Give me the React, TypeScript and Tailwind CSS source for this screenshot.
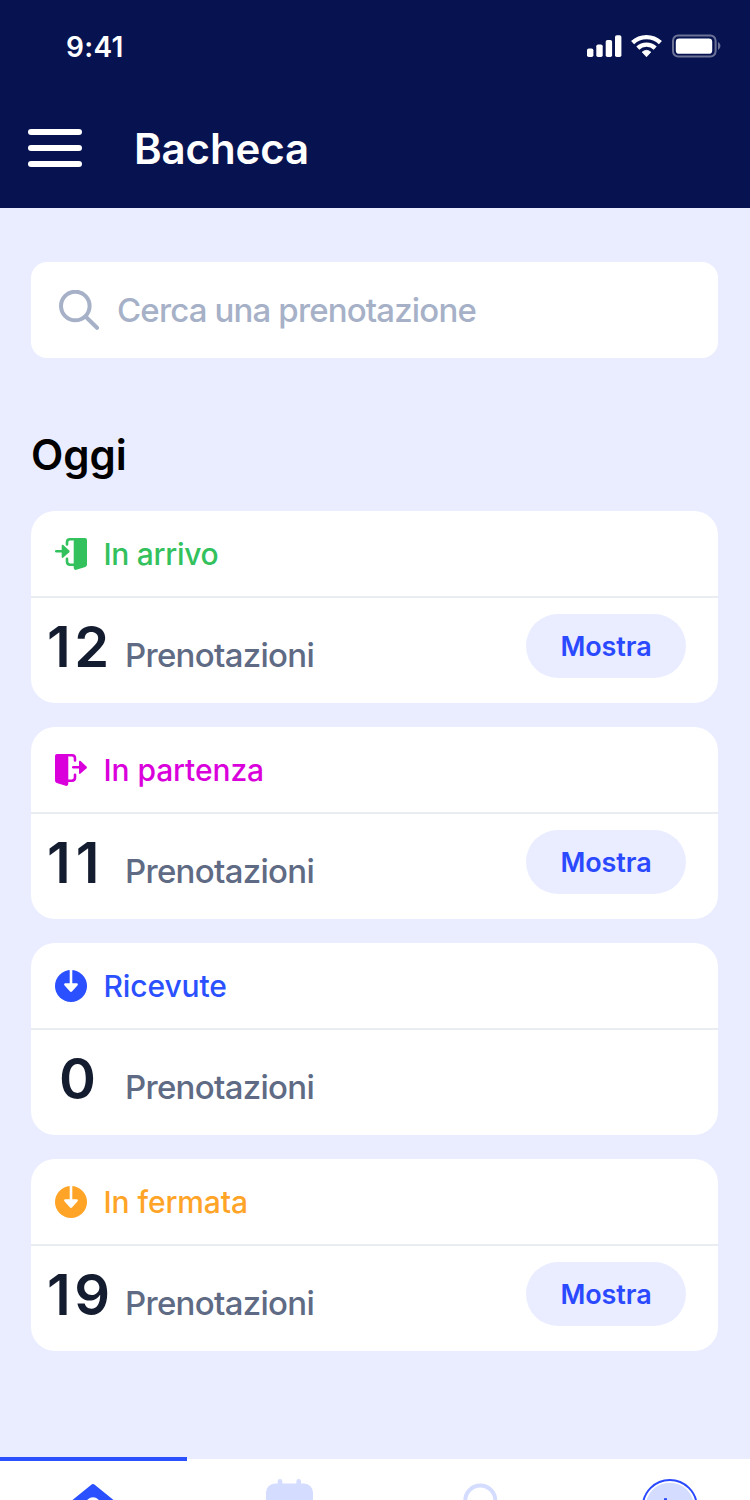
import React from "react";

type IconKind = "enter" | "exit" | "download";

interface Booking {
  label: string;
  count: number;
  icon: IconKind;
  color: string;
  labelSpacing: string;
  countClass: string;
  showButton: boolean;
}

const bookings: Booking[] = [
  {
    label: "In arrivo",
    count: 12,
    icon: "enter",
    color: "text-[#33c15d]",
    labelSpacing: "tracking-[-0.3px]",
    countClass: "tracking-[3.5px]",
    showButton: true,
  },
  {
    label: "In partenza",
    count: 11,
    icon: "exit",
    color: "text-[#da00dc]",
    labelSpacing: "tracking-[-0.1px]",
    countClass: "tracking-[5px]",
    showButton: true,
  },
  {
    label: "Ricevute",
    count: 0,
    icon: "download",
    color: "text-[#2a50ff]",
    labelSpacing: "tracking-[-0.1px]",
    countClass: "pl-3",
    showButton: false,
  },
  {
    label: "In fermata",
    count: 19,
    icon: "download",
    color: "text-[#ffa427]",
    labelSpacing: "tracking-[-0.1px]",
    countClass: "tracking-[3.5px]",
    showButton: true,
  },
];

const StatusIcons = () => (
  <svg width="136" height="28" viewBox="0 0 136 28" fill="white">
    <rect x="1" y="14.5" width="6.4" height="8.5" rx="1.8" />
    <rect x="10.3" y="10.5" width="6.4" height="12.5" rx="1.8" />
    <rect x="19.7" y="6" width="6.4" height="17" rx="1.8" />
    <rect x="29" y="1.2" width="6.4" height="21.8" rx="1.8" />
    <g fill="none" stroke="white" strokeWidth="4.4">
      <path d="M46.6 8.6A20.3 20.3 0 0 1 74.4 8.6" />
      <path d="M51.8 14.1A12.7 12.7 0 0 1 69.2 14.1" />
    </g>
    <path d="M56.2 18.1A6.7 6.7 0 0 1 64.8 18.1L60.5 22.8Z" strokeWidth="0.8" stroke="white" strokeLinejoin="round" />
    <rect x="87" y="1.5" width="42.6" height="21" rx="5.2" fill="none" stroke="#6b7296" strokeWidth="2" />
    <rect x="89.8" y="4.4" width="36.4" height="15.4" rx="3.4" />
    <path d="M132 8.1C135.2 9.6 135.2 14.3 132 15.9Z" fill="#6b7296" />
  </svg>
);

const DoorIcon = ({ kind }: { kind: IconKind }) => {
  if (kind === "enter") {
    return (
      <svg width="32" height="32" viewBox="0 0 32 32" fill="currentColor">
        <path d="M18.7 3.2Q18.7 1.6 20.2 1.1L22.8 0H30Q32 0 32 2V26.5Q32 28.4 30.3 29L21.3 31.8Q18.7 32.4 18.7 29.6Z" />
        <path d="M12 6.4V4.4Q12 1.3 15 1.3H25M12 20.8V23.6Q12 26.7 15 26.7H19" fill="none" stroke="currentColor" strokeWidth="2.6" strokeLinecap="round" />
        <path d="M1.3 13.3H8" fill="none" stroke="currentColor" strokeWidth="2.6" strokeLinecap="round" />
        <path d="M6.7 8Q6.7 6.2 8.3 7.1L14.2 12.4Q15.1 13.3 14.2 14.2L8.3 19.6Q6.7 20.5 6.7 18.7Z" />
      </svg>
    );
  }

  if (kind === "exit") {
    return (
      <svg width="32" height="32" viewBox="0 0 32 32" fill="currentColor">
        <path d="M0 2Q0 0 2 0H9.2L11.8 1.1Q13.3 1.6 13.3 3.2V29.6Q13.3 32.4 10.7 31.8L1.7 29Q0 28.4 0 26.5Z" />
        <path d="M7 1.3H17Q20 1.3 20 4.4V6.4M20 20.8V23.6Q20 26.7 17 26.7H13" fill="none" stroke="currentColor" strokeWidth="2.6" strokeLinecap="round" />
        <path d="M18.3 13.3H26" fill="none" stroke="currentColor" strokeWidth="2.6" strokeLinecap="round" />
        <path d="M24 8Q24 6.2 25.6 7.1L31.5 12.4Q32.4 13.3 31.5 14.2L25.6 19.6Q24 20.5 24 18.7Z" />
      </svg>
    );
  }

  return (
    <svg width="32" height="32" viewBox="0 0 32 32">
      <circle cx="16" cy="16" r="16" fill="currentColor" />
      <path
        d="M14.7 0H17.3V13.3H22Q23.6 13.8 22.6 15.3L17.2 21.3Q16 22.5 14.8 21.3L9.4 15.3Q8.4 13.8 10 13.3H14.7Z"
        fill="white"
      />
    </svg>
  );
};

const BookingCard = ({ booking }: { booking: Booking }) => (
  <section className="flex h-48 flex-col rounded-[24px] bg-white">
    <div className={`flex h-[87px] shrink-0 items-center gap-4 border-b-2 border-[#e9edf2] pt-px pl-6 ${booking.color}`}>
      <DoorIcon kind={booking.icon} />
      <h3 className={`pl-[0.5px] text-[30px] leading-9 font-medium ${booking.labelSpacing}`}>
        {booking.label}
      </h3>
    </div>
    <div className="flex grow items-start justify-between pt-4 pr-8 pl-4">
      <div className="flex items-baseline">
        <span className={`w-[78px] text-[56px] leading-[66px] font-semibold text-[#141c2f] ${booking.countClass}`}>
          {booking.count}
        </span>
        <span className="text-[33px] font-medium tracking-[-0.7px] text-[#5f6b84]">
          Prenotazioni
        </span>
      </div>
      {booking.showButton && (
        <button className="h-16 w-40 rounded-full bg-[#eaedff] pt-0.5 text-[27px] font-semibold tracking-[-0.1px] text-[#2b49ff]">
          Mostra
        </button>
      )}
    </div>
  </section>
);

const TabBar = () => (
  <nav className="flex h-[41px] shrink-0 bg-white">
    <a className="-mt-[2px] h-[43px] w-[187px] border-t-4 border-[#2a50ff]">
      <svg width="187" height="39" viewBox="0 0 187 39">
        <path d="M91 24Q93 22.2 95 24L115 40.2V60H71V40.2Z" fill="#2a50ff" />
        <circle cx="93" cy="43.7" r="7.5" fill="white" />
      </svg>
    </a>
    <a className="w-[188px]">
      <svg width="188" height="41" viewBox="0 0 188 41" fill="#d4dcff">
        <rect x="79" y="24.5" width="47" height="46" rx="9" />
        <path d="M93 22.3V30M111.7 22.3V30" stroke="#d4dcff" strokeWidth="4.6" strokeLinecap="round" />
      </svg>
    </a>
    <a className="w-[188px]">
      <svg width="188" height="41" viewBox="0 0 188 41">
        <circle cx="105.3" cy="41.5" r="15" fill="none" stroke="#d4dcff" strokeWidth="4" />
      </svg>
    </a>
    <a className="w-[187px]">
      <svg width="187" height="41" viewBox="0 0 187 41">
        <circle cx="106.8" cy="48" r="27" fill="white" stroke="#2b49ff" strokeWidth="2" />
        <circle cx="106.8" cy="48" r="24.3" fill="#d4dcff" />
        <rect x="101" y="39.2" width="3" height="12" fill="#2b49ff" />
      </svg>
    </a>
  </nav>
);

export default function App() {
  return (
    <div className="flex h-[1500px] w-[750px] flex-col overflow-hidden bg-[#eaedff] font-['Inter',sans-serif]">
      <header className="h-52 shrink-0 bg-[#071351] text-white">
        <div className="flex h-24 items-center justify-between pr-[28px] pl-[66px]">
          <span className="pb-0.5 text-[28px] font-semibold tracking-[0.3px]">9:41</span>
          <StatusIcons />
        </div>
        <div className="flex h-[104px] items-center gap-[52px] pl-7">
          <button aria-label="Menu" className="flex w-[54px] flex-col gap-[10px]">
            <span className="h-[6px] rounded-full bg-white" />
            <span className="h-[6px] rounded-full bg-white" />
            <span className="h-[6px] rounded-full bg-white" />
          </button>
          <h1 className="text-[42px] font-semibold tracking-[-0.1px]">Bacheca</h1>
        </div>
      </header>

      <main className="flex grow flex-col pt-[54px] pr-8 pl-[31px]">
        <label className="flex h-24 shrink-0 items-center gap-[18px] rounded-2xl bg-white pl-7 text-[#a6b1c8]">
          <svg width="40" height="40" viewBox="0 0 40 40" fill="none" stroke="currentColor" strokeWidth="4" strokeLinecap="round">
            <circle cx="16.3" cy="16" r="14.3" />
            <path d="M27 27L38 37.8" />
          </svg>
          <span className="pt-0.5 text-[33px] font-medium tracking-[-0.85px]">Cerca una prenotazione</span>
        </label>
        <h2 className="mt-[71px] text-[42px] leading-[52px] font-semibold text-black">Oggi</h2>
        <div className="mt-[30px] flex flex-col gap-6">
          {bookings.map((booking) => (
            <BookingCard key={booking.label} booking={booking} />
          ))}
        </div>
      </main>

      <TabBar />
    </div>
  );
}
